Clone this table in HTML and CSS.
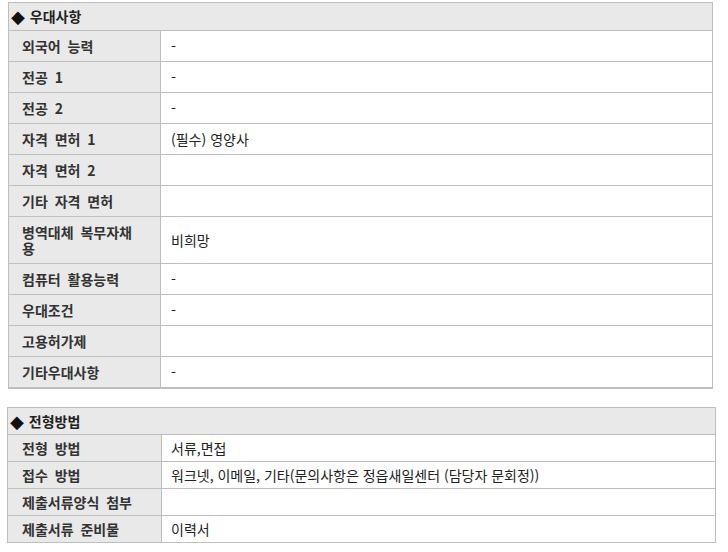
FILE: index.html
```html
<!DOCTYPE html>
<html lang="ko">
<head>
<meta charset="utf-8">
<link rel="stylesheet" href="styles.css">
</head>
<body>
<div class="page">
  <table class="info info-pref">
    <colgroup><col class="c-label"><col></colgroup>
    <tr><th colspan="2" class="head"><span class="mark">◆</span> 우대사항</th></tr>
    <tr><td class="label">외국어 능력</td><td class="value">-</td></tr>
    <tr><td class="label">전공 1</td><td class="value">-</td></tr>
    <tr><td class="label">전공 2</td><td class="value">-</td></tr>
    <tr><td class="label">자격 면허 1</td><td class="value">(필수) 영양사</td></tr>
    <tr><td class="label">자격 면허 2</td><td class="value"></td></tr>
    <tr><td class="label">기타 자격 면허</td><td class="value"></td></tr>
    <tr><td class="label">병역대체 복무자채용</td><td class="value">비희망</td></tr>
    <tr><td class="label">컴퓨터 활용능력</td><td class="value">-</td></tr>
    <tr><td class="label">우대조건</td><td class="value">-</td></tr>
    <tr><td class="label">고용허가제</td><td class="value"></td></tr>
    <tr class="last"><td class="label">기타우대사항</td><td class="value">-</td></tr>
  </table>

  <table class="info info-method">
    <colgroup><col class="c-label"><col></colgroup>
    <tr><th colspan="2" class="head"><span class="mark">◆</span> 전형방법</th></tr>
    <tr><td class="label">전형 방법</td><td class="value">서류,면접</td></tr>
    <tr><td class="label">접수 방법</td><td class="value">워크넷, 이메일, 기타(문의사항은 정읍새일센터 (담당자 문회정))</td></tr>
    <tr><td class="label">제출서류양식 첨부</td><td class="value"></td></tr>
    <tr><td class="label">제출서류 준비물</td><td class="value">이력서</td></tr>
  </table>
</div>
</body>
</html>
```

FILE: styles.css
```css
html, body {
  margin: 0;
  padding: 0;
  background: #ffffff;
}

.page {
  padding-top: 2px;
  font-family: "Noto Sans CJK KR", "Noto Sans", sans-serif;
  font-size: 14px;
  line-height: 16px;
  color: #333333;
}

.info {
  border-collapse: collapse;
  table-layout: fixed;
}

.info td,
.info th {
  border: 1px solid #bebebe;
  text-align: left;
  vertical-align: middle;
  line-height: 16px;
}

.head {
  background: #e9e9e9;
  font-weight: bold;
  color: #222222;
  word-spacing: 1px;
}

.mark {
  font-family: "DejaVu Sans", sans-serif;
  font-size: 18px;
  line-height: 0;
  color: #111111;
  vertical-align: -1px;
}

.label {
  background: #e9e9e9;
  font-weight: bold;
  color: #333333;
  word-spacing: 3px;
}

.value {
  background: #ffffff;
  color: #222222;
}

/* first table */
.info-pref {
  margin-left: 8px;
  width: 705px;
}

.info-pref .c-label {
  width: 152px;
}

.info-pref .head {
  padding: 5px 2px 6px 2px;
}

.info-pref .label {
  padding: 7px 25px 7px 13px;
}

.info-pref .value {
  padding: 7px 10px;
}

.info-pref .last td {
  border-bottom-width: 2px;
}

/* second table */
.info-method {
  margin-top: 18px;
  margin-left: 7px;
  width: 709px;
}

.info-method .c-label {
  width: 154px;
}

.info-method .head {
  padding: 5px 2px;
}

.info-method .label {
  padding: 5px 4px 5px 14px;
}

.info-method .value {
  padding: 5px 9px;
}
```
